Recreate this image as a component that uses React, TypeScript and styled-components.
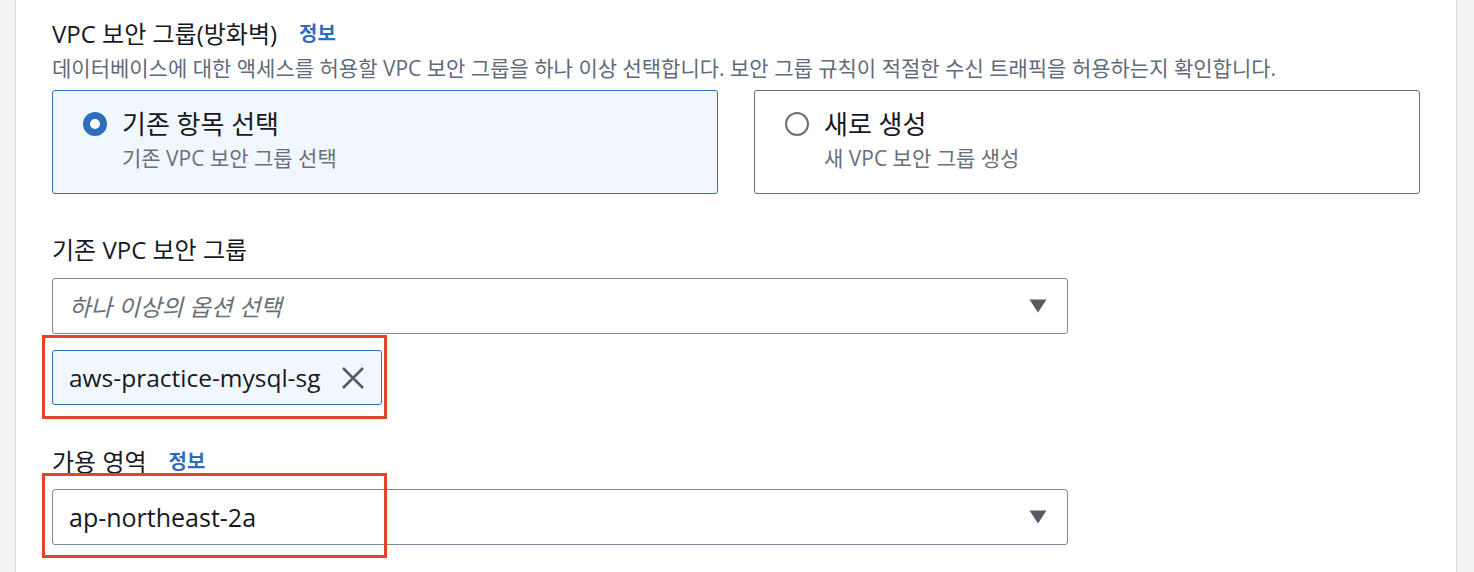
import { type FC } from "react";
import styled, { createGlobalStyle } from "styled-components";

const GlobalStyle = createGlobalStyle`
  html, body {
    margin: 0;
    padding: 0;
    background: #fff;
  }
  body {
    font-family: "Open Sans", "Noto Sans CJK KR", sans-serif;
    color: #16191f;
  }
`;

const Page = styled.div`
  display: flex;
  width: 1474px;
  height: 572px;
  overflow: hidden;
`;

const Rail = styled.div<{ $side: "left" | "right" }>`
  flex: 0 0 ${(p) => (p.$side === "left" ? "15px" : "17px")};
  background: #f2f3f3;
  ${(p) =>
    p.$side === "left"
      ? "border-right: 1px solid #d5dbdb;"
      : "border-left: 1px solid #d5dbdb;"}
`;

const Main = styled.main`
  flex: 1;
  background: #fff;
  padding: 20px 0 0 36px;
  display: flex;
  flex-direction: column;
`;

const Heading = styled.div<{ $top?: number }>`
  display: flex;
  align-items: center;
  gap: 22px;
  margin-top: ${(p) => p.$top ?? 0}px;
  font-size: 24px;
  line-height: 28px;
  color: #16191f;
`;

const InfoLink = styled.a`
  color: #2f6eba;
  font-weight: 700;
  font-size: 20px;
  text-decoration: none;
`;

const Description = styled.p`
  margin: 7px 0 0;
  font-size: 21px;
  line-height: 26px;
  color: #5f6b7a;
  white-space: nowrap;
`;

const Tiles = styled.div`
  display: grid;
  grid-template-columns: 666px 666px;
  gap: 36px;
  margin-top: 9px;
`;

const Tile = styled.label<{ $checked?: boolean }>`
  box-sizing: border-box;
  height: 104px;
  padding: 18px 20px 0 30px;
  display: flex;
  align-items: flex-start;
  gap: 15px;
  border: 1px solid ${(p) => (p.$checked ? "#2f6eba" : "#687078")};
  background: ${(p) => (p.$checked ? "#f1f8fd" : "#fff")};
  border-radius: 3px;
`;

const Radio = styled.span<{ $checked?: boolean }>`
  box-sizing: border-box;
  flex: 0 0 auto;
  width: 24px;
  height: 24px;
  margin-top: 3px;
  border-radius: 50%;
  background: #fff;
  border: ${(p) => (p.$checked ? "7px solid #2f6eba" : "2px solid #687078")};
`;

const TileText = styled.div`
  display: flex;
  flex-direction: column;
  gap: 6px;
`;

const TileTitle = styled.span`
  font-size: 26px;
  line-height: 30px;
  color: #16191f;
`;

const TileSub = styled.span`
  font-size: 21px;
  line-height: 26px;
  color: #687078;
`;

const Annotated = styled.div<{ $top: number }>`
  position: relative;
  width: 1016px;
  margin-top: ${(p) => p.$top}px;
`;

const Highlight = styled.div<{ $top: number; $bottom: number }>`
  position: absolute;
  left: -10px;
  width: 345px;
  top: -${(p) => p.$top}px;
  bottom: -${(p) => p.$bottom}px;
  box-sizing: border-box;
  border: 3px solid #e5432b;
  pointer-events: none;
`;

const Select = styled.div<{ $top?: number }>`
  box-sizing: border-box;
  width: 1016px;
  height: 56px;
  margin-top: ${(p) => p.$top ?? 0}px;
  padding: 0 20px 0 16px;
  display: flex;
  align-items: center;
  justify-content: space-between;
  border: 1px solid #7d8998;
  border-radius: 3px;
  background: #fff;
  font-size: 24px;
`;

const Placeholder = styled.span`
  font-style: italic;
  color: #687078;
  font-size: 23.5px;
`;

const Value = styled.span`
  color: #16191f;
  font-size: 25px;
`;

const Token = styled.div`
  box-sizing: border-box;
  height: 55px;
  width: 330px;
  padding: 0 16px;
  display: flex;
  align-items: center;
  justify-content: space-between;
  border: 1px solid #2f6eba;
  border-radius: 3px;
  background: #f1f8fd;
  font-size: 24.5px;
  color: #16191f;
`;

const Caret: FC = () => (
  <svg width="18" height="14" viewBox="0 0 18 14">
    <path d="M0.5 0.5 H17.5 L9 13.5 Z" fill="#545b64" />
  </svg>
);

const Dismiss: FC = () => (
  <svg width="24" height="24" viewBox="0 0 24 24">
    <path
      d="M2 2 L22 22 M22 2 L2 22"
      stroke="#545b64"
      strokeWidth="2.6"
      fill="none"
    />
  </svg>
);

const App: FC = () => {
  return (
    <Page>
      <GlobalStyle />
      <Rail $side="left" />
      <Main>
        <Heading>
          <span>VPC 보안 그룹(방화벽)</span>
          <InfoLink>정보</InfoLink>
        </Heading>
        <Description>
          데이터베이스에 대한 액세스를 허용할 VPC 보안 그룹을 하나 이상 선택합니다. 보안 그룹 규칙이 적절한 수신 트래픽을 허용하는지 확인합니다.
        </Description>

        <Tiles>
          <Tile $checked>
            <Radio $checked />
            <TileText>
              <TileTitle>기존 항목 선택</TileTitle>
              <TileSub>기존 VPC 보안 그룹 선택</TileSub>
            </TileText>
          </Tile>
          <Tile>
            <Radio />
            <TileText>
              <TileTitle>새로 생성</TileTitle>
              <TileSub>새 VPC 보안 그룹 생성</TileSub>
            </TileText>
          </Tile>
        </Tiles>

        <Heading $top={42}>기존 VPC 보안 그룹</Heading>
        <Select $top={14}>
          <Placeholder>하나 이상의 옵션 선택</Placeholder>
          <Caret />
        </Select>
        <Annotated $top={16}>
          <Token>
            <span>aws-practice-mysql-sg</span>
            <Dismiss />
          </Token>
          <Highlight $top={15} $bottom={14} />
        </Annotated>

        <Heading $top={43}>
          <span>가용 영역</span>
          <InfoLink>정보</InfoLink>
        </Heading>
        <Annotated $top={13}>
          <Select>
            <Value>ap-northeast-2a</Value>
            <Caret />
          </Select>
          <Highlight $top={16} $bottom={13} />
        </Annotated>
      </Main>
      <Rail $side="right" />
    </Page>
  );
};

export default App;
